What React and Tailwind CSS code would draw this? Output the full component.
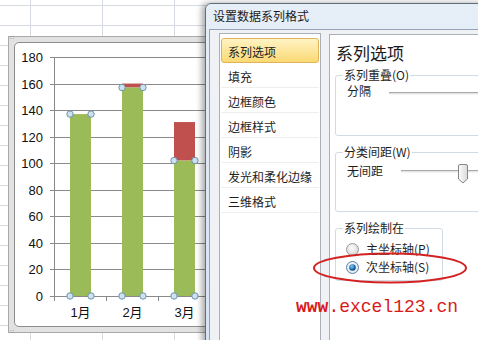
import React from 'react';

const cjk = "font-['Noto_Sans_CJK_SC','Liberation_Sans',sans-serif]";

// value -> pixel y inside the plot (page coordinates)
const yOf = (v) => 296 - v * 1.3278;

const bars = [
  { label: '1月', green: 137, red: 0 },
  { label: '2月', green: 157, red: 3 },
  { label: '3月', green: 102, red: 29 },
];

const SheetGrid = () => {
  const rows = [];
  for (let y = 5.5; y < 340; y += 20) rows.push(y);
  return (
    <svg className="absolute inset-0" width="478" height="340">
      {rows.map((y) => (
        <line key={y} x1="0" x2="478" y1={y} y2={y} stroke="#d6dbe3" />
      ))}
      {[30.5, 102.5, 174.5].map((x) => (
        <line key={x} x1={x} x2={x} y1="0" y2="340" stroke="#d6dbe3" />
      ))}
    </svg>
  );
};

const Handle = ({ cx, cy }) => (
  <circle cx={cx} cy={cy} r="3.2" fill="#cfe1ec" stroke="#6d93ac" strokeWidth="1" />
);

const ChartWindow = () => {
  const ticks = [];
  for (let k = 0; k <= 9; k++) ticks.push({ v: k * 20, y: Math.round(yOf(k * 20)) + 0.5 });

  return (
    <div className="absolute left-[8px] top-[36px] w-[220px] h-[297px] border border-[#a9a9a9] bg-[#e2e2e2] p-[5px]">
      <div className="absolute left-[1px] top-[-3px] text-[6px] leading-[6px] tracking-[-1px] text-[#8a8a8a]">∷</div>
      <div className="absolute left-[1px] bottom-[-2px] text-[6px] leading-[6px] tracking-[-1px] text-[#8a8a8a]">∷</div>
      <div className="w-full h-full rounded-[5px] border border-[#8c8c8c] bg-white overflow-hidden">
        <svg width="206" height="283" viewBox="15 43 206 283">
          {ticks.map((t) => (
            <g key={t.v}>
              <line x1="50" x2="230" y1={t.y} y2={t.y} stroke="#8a8a8a" />
              <text
                x="43"
                y={t.y + 4.5}
                textAnchor="end"
                fontSize="13"
                fontFamily="'Liberation Sans', Arial, sans-serif"
                fill="#111"
              >
                {t.v}
              </text>
            </g>
          ))}
          <line x1="54.5" x2="54.5" y1="57" y2="296" stroke="#8a8a8a" />
          {[54.5, 106.5, 158.5, 210.5].map((x) => (
            <line key={x} x1={x} x2={x} y1="296" y2="301" stroke="#8a8a8a" />
          ))}
          {bars.map((b, i) => {
            const x = 70 + 52 * i;
            const gTop = yOf(b.green);
            const rTop = yOf(b.green + b.red);
            return (
              <g key={b.label}>
                {b.red > 0 && <rect x={x} y={rTop} width="21" height={gTop - rTop} fill="#c0504d" />}
                <rect x={x} y={gTop} width="21" height={296 - gTop} fill="#9bbb59" />
                <Handle cx={x} cy={gTop} />
                <Handle cx={x + 21} cy={gTop} />
                <Handle cx={x} cy={296} />
                <Handle cx={x + 21} cy={296} />
                <text
                  x={x + 10.5}
                  y="317"
                  textAnchor="middle"
                  fontSize="13"
                  fontFamily="'Liberation Sans', 'Noto Sans CJK SC', sans-serif"
                  fill="#111"
                >
                  {b.label}
                </text>
              </g>
            );
          })}
        </svg>
      </div>
    </div>
  );
};

const Radio = ({ checked }) => (
  <svg width="13" height="13" viewBox="0 0 13 13" className="shrink-0">
    <defs>
      <radialGradient id={checked ? 'rOn' : 'rOff'} cx="0.45" cy="0.4" r="0.6">
        <stop offset="0" stopColor="#ffffff" />
        <stop offset="1" stopColor={checked ? '#dbe6f0' : '#d4d4d4'} />
      </radialGradient>
      <radialGradient id="dot" cx="0.4" cy="0.35" r="0.7">
        <stop offset="0" stopColor="#8fd0f4" />
        <stop offset="0.6" stopColor="#1f6cae" />
        <stop offset="1" stopColor="#16446e" />
      </radialGradient>
    </defs>
    <circle cx="6.5" cy="6.5" r="6" fill={`url(#${checked ? 'rOn' : 'rOff'})`} stroke={checked ? '#5d7f9e' : '#9a9a9a'} />
    {checked && <circle cx="6.5" cy="6.5" r="3.3" fill="url(#dot)" />}
  </svg>
);

const Track = ({ className }) => (
  <div className={`h-[3px] border-t border-[#a8a8a8] border-b border-b-[#f4f4f4] bg-[#e4e4e4] ${className}`} />
);

const Thumb = () => (
  <svg width="10" height="20" viewBox="0 0 10 20">
    <defs>
      <linearGradient id="thumb" x1="0" x2="1">
        <stop offset="0" stopColor="#fdfdfd" />
        <stop offset="1" stopColor="#d9d9d9" />
      </linearGradient>
    </defs>
    <path d="M2 0.5 h6 a1.5 1.5 0 0 1 1.5 1.5 v13 l-4.5 4 l-4.5 -4 v-13 a1.5 1.5 0 0 1 1.5 -1.5z" fill="url(#thumb)" stroke="#858585" />
  </svg>
);

const navItems = ['系列选项', '填充', '边框颜色', '边框样式', '阴影', '发光和柔化边缘', '三维格式'];

const FormatDialog = () => (
  <div
    className={`absolute left-[205px] top-[3px] w-[290px] h-[345px] rounded-tl-[6px] border border-[#5f6d7f] bg-[linear-gradient(to_bottom,#e6eef8,#d6e3f3)] shadow-[-3px_0_6px_rgba(0,0,0,0.35)] flex flex-col ${cjk}`}
  >
    <div className="h-[25px] shrink-0 pl-[7px] pt-[5px] text-[12px] leading-[14px] text-[#1b1b1b]">设置数据系列格式</div>
    <div className="flex-1 ml-[3px] border-l border-t border-[#93a2b6] bg-[#eff1f4] flex items-start pt-[3px] pl-[9px] gap-[8px]">
      {/* category list */}
      <div className="w-[102px] h-[320px] shrink-0 border border-[#a9b0b8] bg-white px-[1px] pt-[4px]">
        {navItems.map((item, i) => (
          <div
            key={item}
            className={`h-[25px] pl-[6px] pt-[6px] text-[12px] leading-[14px] text-[#1e1e1e] ${
              i === 0
                ? 'rounded-[3px] border border-[#e0b55a] bg-[linear-gradient(to_bottom,#fef3c4,#fbd974)]'
                : 'border border-transparent border-b-[#eeeeee]'
            }`}
          >
            {item}
          </div>
        ))}
      </div>

      {/* options panel */}
      <div className="mt-[1px] w-[200px] h-[320px] shrink-0 border border-[#a9b0b8] bg-white pl-[5px] pt-[8px]">
        <div className="pl-[1px] text-[17px] leading-[20px] text-[#1a1a1a]">系列选项</div>

        <fieldset className="mt-[4px] h-[69px] w-[200px] border border-[#d3dbe2] rounded-[3px] pl-[7px]">
          <legend className="px-[1px] text-[12px] leading-[16px] text-[#1e1e1e]">系列重叠(O)</legend>
          <div className="flex items-start pl-[4px] pt-[1px]">
            <span className="text-[12px] leading-[14px] text-[#1e1e1e]">分隔</span>
            <Track className="ml-[18px] mt-[8px] w-[120px]" />
          </div>
        </fieldset>

        <fieldset className="mt-[8px] h-[68px] w-[200px] border border-[#d3dbe2] rounded-[3px] pl-[7px]">
          <legend className="px-[1px] text-[12px] leading-[16px] text-[#1e1e1e]">分类间距(W)</legend>
          <div className="flex items-start pl-[4px] pt-[4px]">
            <span className="text-[12px] leading-[14px] text-[#1e1e1e]">无间距</span>
            <div className="relative ml-[18px] mt-[6px] w-[120px]">
              <Track className="w-full" />
              <div className="absolute left-[57px] top-[-6px]">
                <Thumb />
              </div>
            </div>
          </div>
        </fieldset>

        <fieldset className="mt-[8px] h-[61px] w-[108px] border border-[#d3dbe2] rounded-[3px] pl-[7px]">
          <legend className="px-[1px] text-[12px] leading-[16px] text-[#1e1e1e]">系列绘制在</legend>
          <div className="pt-[4px] pl-[3px] flex flex-col">
            <label className="h-[18px] flex items-center">
              <Radio checked={false} />
              <span className="ml-[7px] text-[12px] leading-[14px] text-[#1e1e1e]">主坐标轴(P)</span>
            </label>
            <label className="h-[18px] flex items-center">
              <Radio checked />
              <span className="ml-[7px] text-[12px] leading-[14px] text-[#1e1e1e]">次坐标轴(S)</span>
            </label>
          </div>
        </fieldset>
      </div>
    </div>
  </div>
);

export default function App() {
  return (
    <div className="relative w-[478px] h-[340px] overflow-hidden bg-white">
      <SheetGrid />
      <ChartWindow />
      <FormatDialog />

      {/* hand-drawn highlight */}
      <svg className="absolute left-[312px] top-[252px]" width="158" height="33" viewBox="0 0 158 33">
        <ellipse cx="78" cy="16" rx="76" ry="14.5" fill="none" stroke="#d42222" strokeWidth="2" />
      </svg>

      {/* watermark */}
      <div className="absolute left-[296px] top-[298px] text-[18px] leading-[18px] text-[#d91a1a] font-['Liberation_Mono',monospace] whitespace-nowrap">
        <span className="font-bold">www</span>.excel123.cn
      </div>
    </div>
  );
}
